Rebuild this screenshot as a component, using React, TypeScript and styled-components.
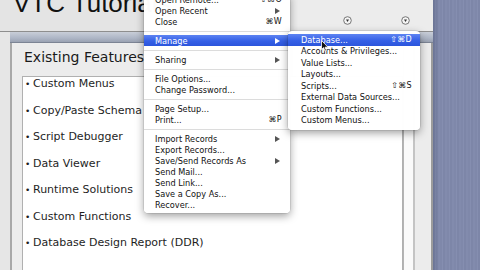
import React from 'react';
import styled, { createGlobalStyle } from 'styled-components';

const GlobalStyle = createGlobalStyle`
  html, body {
    margin: 0;
    padding: 0;
    width: 480px;
    height: 270px;
    overflow: hidden;
    background: #e6e6e6;
  }
`;

type MenuEntry =
  | { kind: 'sep' }
  | { kind: 'item'; label: string; shortcut?: string; sub?: boolean; active?: boolean };

const fileMenu: MenuEntry[] = [
  { kind: 'item', label: 'Open Remote...', shortcut: '⇧⌘O' },
  { kind: 'item', label: 'Open Recent', sub: true },
  { kind: 'item', label: 'Close', shortcut: '⌘W' },
  { kind: 'sep' },
  { kind: 'item', label: 'Manage', sub: true, active: true },
  { kind: 'sep' },
  { kind: 'item', label: 'Sharing', sub: true },
  { kind: 'sep' },
  { kind: 'item', label: 'File Options...' },
  { kind: 'item', label: 'Change Password...' },
  { kind: 'sep' },
  { kind: 'item', label: 'Page Setup...' },
  { kind: 'item', label: 'Print...', shortcut: '⌘P' },
  { kind: 'sep' },
  { kind: 'item', label: 'Import Records', sub: true },
  { kind: 'item', label: 'Export Records...' },
  { kind: 'item', label: 'Save/Send Records As', sub: true },
  { kind: 'item', label: 'Send Mail...' },
  { kind: 'item', label: 'Send Link...' },
  { kind: 'item', label: 'Save a Copy As...' },
  { kind: 'item', label: 'Recover...' },
];

const manageMenu: MenuEntry[] = [
  { kind: 'item', label: 'Database...', shortcut: '⇧⌘D', active: true },
  { kind: 'item', label: 'Accounts & Privileges...' },
  { kind: 'item', label: 'Value Lists...' },
  { kind: 'item', label: 'Layouts...' },
  { kind: 'item', label: 'Scripts...', shortcut: '⇧⌘S' },
  { kind: 'item', label: 'External Data Sources...' },
  { kind: 'item', label: 'Custom Functions...' },
  { kind: 'item', label: 'Custom Menus...' },
];

const features = [
  'Custom Menus',
  'Copy/Paste Schema',
  'Script Debugger',
  'Data Viewer',
  'Runtime Solutions',
  'Custom Functions',
  'Database Design Report (DDR)',
];

const MenuList = ({ entries, rowHeight, indent }: { entries: MenuEntry[]; rowHeight: number; indent: number }) => (
  <>
    {entries.map((e, i) =>
      e.kind === 'sep' ? (
        <Separator key={i} />
      ) : (
        <Row key={i} $active={e.active} $height={rowHeight} $indent={indent}>
          <span>{e.label}</span>
          {e.shortcut && <Shortcut>{e.shortcut}</Shortcut>}
          {e.sub && <Arrow $active={e.active} />}
        </Row>
      )
    )}
  </>
);

const PopupIcon = () => (
  <svg width="9" height="9" viewBox="0 0 9 9">
    <circle cx="4.5" cy="4.5" r="3.8" fill="#f4f4f4" stroke="#6a6a6a" strokeWidth="0.9" />
    <path d="M3 3.6 L6 3.6 L4.5 6 Z" fill="#333" />
  </svg>
);

const Pointer = () => (
  <svg width="8" height="12" viewBox="0 0 8 12">
    <path d="M0.5 0.5 L0.5 9.5 L2.6 7.6 L4 11 L5.4 10.4 L4 7.2 L7 7.2 Z" fill="#111" stroke="#fff" strokeWidth="0.8" />
  </svg>
);

export default function App() {
  return (
    <>
      <GlobalStyle />
      <Screen>
        <Window>
          <Toolbar>
            <Title>VTC Tutorials</Title>
            <Icons>
              <PopupIcon />
              <PopupIcon />
            </Icons>
          </Toolbar>
          <Bar />
          <Body>
            <Panel>
              <Heading>Existing Features</Heading>
              <ListBox>
                {features.map((f) => (
                  <Item key={f}>{f}</Item>
                ))}
              </ListBox>
            </Panel>
            <Rails>
              <Rail $w={1} $c="#b4b4b4" />
              <Rail $w={9} $c="#fafafa" />
              <Rail $w={2} $c="#c4c4c4" />
              <Rail $w={16} $c="#ececec" />
              <Rail $w={2} $c="#9c9c9c" />
            </Rails>
          </Body>
        </Window>
        <Desktop />
        <FileMenu>
          <MenuList entries={fileMenu} rowHeight={11} indent={11} />
        </FileMenu>
        <SubMenu>
          <MenuList entries={manageMenu} rowHeight={11.5} indent={13} />
        </SubMenu>
        <Cursor>
          <Pointer />
        </Cursor>
      </Screen>
    </>
  );
}

const Screen = styled.div`
  position: relative;
  width: 480px;
  height: 270px;
  display: flex;
  overflow: hidden;
`;

const Window = styled.div`
  width: 433px;
  height: 270px;
  display: flex;
  flex-direction: column;
  background: #e6e6e6;
`;

const Toolbar = styled.div`
  height: 32px;
  display: flex;
  align-items: flex-start;
  justify-content: space-between;
  padding: 0 23px 0 13px;
  background: linear-gradient(90deg, #e4e4e4 0 66%, #ececec 66% 100%);
  border-bottom: 1px solid #8e8e8e;
  box-sizing: border-box;
`;

const Title = styled.div`
  font-family: 'Liberation Sans', Arial, sans-serif;
  font-size: 26px;
  line-height: 26px;
  margin-top: -10px;
  color: #111;
  white-space: nowrap;
`;

const Icons = styled.div`
  display: flex;
  gap: 49px;
  margin-top: 16px;
`;

const Bar = styled.div`
  height: 10px;
  margin-left: 10px;
  background: linear-gradient(#c9ced8, #aeb6c6 60%, #9aa2b2);
  border-bottom: 1px solid #7c8494;
`;

const Body = styled.div`
  flex: 1;
  display: flex;
  padding-left: 10px;
  min-height: 0;
`;

const Panel = styled.div`
  flex: 1;
  display: flex;
  flex-direction: column;
  border-left: 2px solid #a8a8a8;
  background: #ececec;
  padding: 0 0 0 10px;
`;

const Heading = styled.div`
  font-family: 'DejaVu Sans', Verdana, sans-serif;
  font-size: 14px;
  line-height: 22px;
  color: #1a1a1a;
  padding: 3px 0 0 2px;
  height: 30px;
`;

const ListBox = styled.ul`
  flex: 1;
  margin: 0;
  list-style: none;
  background: #fff;
  border: 1px solid #b0b0b0;
  border-bottom: none;
  padding: 0 0 0 2px;
`;

const Item = styled.li`
  font-family: 'DejaVu Sans', Verdana, sans-serif;
  font-size: 11px;
  line-height: 13px;
  height: 13px;
  margin-bottom: 13.5px;
  color: #1e1e1e;
  white-space: nowrap;

  &::before {
    content: '•';
    display: inline-block;
    width: 8px;
    font-size: 9px;
  }
`;

const Rails = styled.div`
  display: flex;
`;

const Rail = styled.div<{ $w: number; $c: string }>`
  width: ${({ $w }) => $w}px;
  background: ${({ $c }) => $c};
`;

const Desktop = styled.div`
  flex: 1;
  background:
    linear-gradient(90deg, rgba(60, 70, 100, 0.3), rgba(60, 70, 100, 0) 6px),
    repeating-linear-gradient(90deg, #7f88aa 0 2px, #858eb0 2px 3px, #7d86a8 3px 5px, #828bad 5px 7px);
`;

const MenuBox = styled.div`
  position: absolute;
  background: rgba(255, 255, 255, 0.98);
  box-shadow: 0 3px 9px rgba(0, 0, 0, 0.38), 0 0 0 0.5px rgba(0, 0, 0, 0.15);
  border-radius: 0 0 4px 4px;
  font-family: 'DejaVu Sans', 'Lucida Grande', sans-serif;
  font-size: 8.2px;
  color: #111;
`;

const FileMenu = styled(MenuBox)`
  left: 144px;
  top: -6px;
  width: 146px;
  padding: 0 0 3px;
`;

const SubMenu = styled(MenuBox)`
  left: 288px;
  top: 31px;
  width: 132px;
  padding: 3px 0 4px;
  border-radius: 4px;
`;

const Row = styled.div<{ $active?: boolean; $height: number; $indent: number }>`
  display: flex;
  align-items: center;
  height: ${({ $height }) => $height}px;
  padding: 0 8px 0 ${({ $indent }) => $indent}px;
  white-space: nowrap;
  color: ${({ $active }) => ($active ? '#fff' : '#111')};
  background: ${({ $active }) => ($active ? 'linear-gradient(#5d83f2, #3560e6 55%, #2b55dc)' : 'transparent')};

  span:first-child {
    flex: 1;
  }
`;

const Shortcut = styled.span`
  font-size: 8px;
  letter-spacing: 0.3px;
`;

const Arrow = styled.span<{ $active?: boolean }>`
  width: 0;
  height: 0;
  border-top: 3px solid transparent;
  border-bottom: 3px solid transparent;
  border-left: 5px solid ${({ $active }) => ($active ? '#fff' : '#555')};
  margin-right: 2px;
`;

const Separator = styled.div`
  height: 8px;
  display: flex;
  align-items: center;

  &::after {
    content: '';
    flex: 1;
    height: 1px;
    background: #dcdcdc;
  }
`;

const Cursor = styled.div`
  position: absolute;
  left: 321px;
  top: 40px;
  line-height: 0;
`;
